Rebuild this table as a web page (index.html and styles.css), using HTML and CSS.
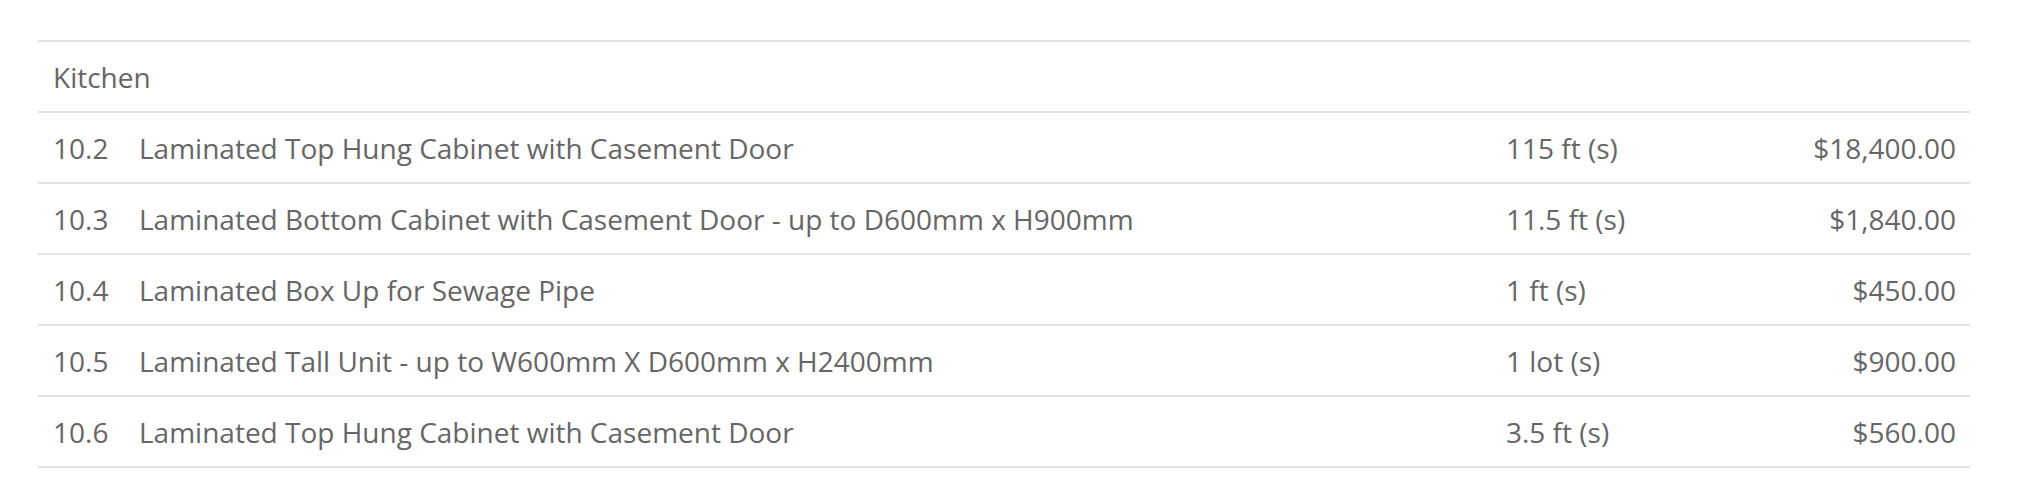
FILE: index.html
```html
<!DOCTYPE html>
<html>
<head>
<meta charset="utf-8">
<link rel="stylesheet" href="styles.css">
</head>
<body>
<div class="wrap">
<table class="quote">
<colgroup>
<col class="c-no"><col class="c-desc"><col class="c-qty"><col class="c-price">
</colgroup>
<tbody>
<tr class="section"><td colspan="4">Kitchen</td></tr>
<tr><td>10.2</td><td>Laminated Top Hung Cabinet with Casement Door</td><td>115 ft (s)</td><td class="price">$18,400.00</td></tr>
<tr><td>10.3</td><td>Laminated Bottom Cabinet with Casement Door - up to D600mm x H900mm</td><td>11.5 ft (s)</td><td class="price">$1,840.00</td></tr>
<tr><td>10.4</td><td>Laminated Box Up for Sewage Pipe</td><td>1 ft (s)</td><td class="price">$450.00</td></tr>
<tr><td>10.5</td><td>Laminated Tall Unit - up to W600mm X D600mm x H2400mm</td><td>1 lot (s)</td><td class="price">$900.00</td></tr>
<tr><td>10.6</td><td>Laminated Top Hung Cabinet with Casement Door</td><td>3.5 ft (s)</td><td class="price">$560.00</td></tr>
</tbody>
</table>
</div>
</body>
</html>
```
FILE: styles.css
```css
html, body {
  margin: 0;
  padding: 0;
  background: #fff;
}
.wrap {
  padding: 40px 70px 0 38px;
}
.quote {
  width: 100%;
  border-collapse: collapse;
  table-layout: fixed;
  font-family: "Open Sans", sans-serif;
  font-size: 28px;
  color: #666;
  border-top: 2px solid #e2e2e2;
}
.c-no { width: 86px; }
.c-qty { width: 250px; }
.c-price { width: 229px; }
.quote td {
  padding: 15px 15px 13px;
  line-height: 41px;
  border-bottom: 2px solid #e2e2e2;
  white-space: nowrap;
  vertical-align: middle;
}
.quote td.price {
  text-align: right;
  padding-right: 14px;
}
```
